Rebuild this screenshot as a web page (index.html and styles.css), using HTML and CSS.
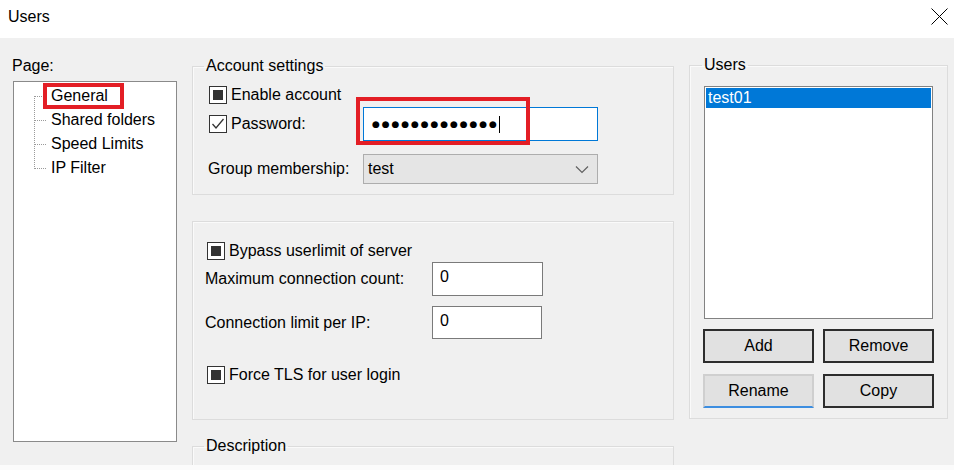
FILE: index.html
```html
<!DOCTYPE html>
<html>
<head>
<meta charset="utf-8">
<title>Users</title>
<link rel="stylesheet" href="styles.css">
</head>
<body>
<div class="window">
  <div class="titlebar">
    <span class="title">Users</span>
    <svg class="close" width="17" height="17" viewBox="0 0 17 17"><line x1="0.5" y1="0.5" x2="16.5" y2="16.5"/><line x1="16.5" y1="0.5" x2="0.5" y2="16.5"/></svg>
  </div>
  <div class="main">
    <div class="col-left">
      <div class="page-label">Page:</div>
      <div class="tree">
        <svg class="tree-lines" width="14" height="96" viewBox="0 0 14 96">
          <line x1="1.5" y1="12" x2="1.5" y2="85"/>
          <line x1="2" y1="12.5" x2="14" y2="12.5"/>
          <line x1="2" y1="36.5" x2="14" y2="36.5"/>
          <line x1="2" y1="60.5" x2="14" y2="60.5"/>
          <line x1="2" y1="84.5" x2="14" y2="84.5"/>
        </svg>
        <ul class="tree-items">
          <li><span class="tree-label marked">General</span></li>
          <li><span class="tree-label">Shared folders</span></li>
          <li><span class="tree-label">Speed Limits</span></li>
          <li><span class="tree-label">IP Filter</span></li>
        </ul>
      </div>
    </div>
    <div class="col-mid">
      <fieldset class="group acct">
        <legend>Account settings</legend>
        <div class="acct-body">
          <div class="row r-enable">
            <span class="cb"><span class="cb-fill"></span></span>
            <span class="cb-text">Enable account</span>
          </div>
          <div class="row r-pass">
            <div class="pass-left">
              <span class="cb"><svg width="16" height="16" viewBox="0 0 16 16"><polyline points="2.5,8 6,12 13.5,3"/></svg></span>
              <span class="cb-text">Password:</span>
            </div>
            <div class="textbox focused"><span class="dots">●●●●●●●●●●●●●</span><span class="caret"></span></div>
            <span class="annot"></span>
          </div>
          <div class="row r-group">
            <span class="group-label">Group membership:</span>
            <div class="select"><span>test</span><svg width="14" height="9" viewBox="0 0 14 9"><polyline points="1,1.5 7,7.5 13,1.5"/></svg></div>
          </div>
        </div>
      </fieldset>
      <fieldset class="group limits">
        <div class="limits-body">
          <div class="row r-bypass">
            <span class="cb"><span class="cb-fill"></span></span>
            <span class="cb-text">Bypass userlimit of server</span>
          </div>
          <div class="row r-max">
            <span class="field-label">Maximum connection count:</span>
            <div class="numbox">0</div>
          </div>
          <div class="row r-perip">
            <span class="field-label">Connection limit per IP:</span>
            <div class="numbox short">0</div>
          </div>
          <div class="row r-tls">
            <span class="cb"><span class="cb-fill"></span></span>
            <span class="cb-text">Force TLS for user login</span>
          </div>
        </div>
      </fieldset>
      <fieldset class="group desc">
        <legend>Description</legend>
      </fieldset>
    </div>
    <div class="col-right">
      <fieldset class="group users">
        <legend>Users</legend>
        <div class="users-body">
          <div class="listbox">
            <div class="list-item selected">test01</div>
          </div>
          <div class="btn-row first">
            <div class="btn">Add</div>
            <div class="btn">Remove</div>
          </div>
          <div class="btn-row">
            <div class="btn hover">Rename</div>
            <div class="btn">Copy</div>
          </div>
        </div>
      </fieldset>
    </div>
  </div>
  <div class="bottom-strip"></div>
</div>
</body>
</html>
```

FILE: styles.css
```css
* { box-sizing: border-box; }
html, body { margin: 0; padding: 0; }
body {
  width: 954px;
  height: 470px;
  overflow: hidden;
  background: #f0f0f0;
  font-family: "Liberation Sans", Arial, sans-serif;
  font-size: 16px;
  line-height: 18px;
  color: #000;
}
.window { width: 954px; height: 470px; display: flex; flex-direction: column; }
.titlebar {
  height: 38px;
  background: #fff;
  display: flex;
  justify-content: space-between;
  align-items: flex-start;
  padding: 8px 6px 0 8px;
  flex: none;
}
.title { line-height: 18px; }
.close { margin-top: 0; }
.close line { stroke: #000; stroke-width: 1; }

.main {
  height: 427px;
  display: flex;
  padding-left: 12px;
  overflow: hidden;
  flex: none;
}
.bottom-strip { height: 5px; background: #fbfbfb; flex: none; }

/* left column */
.col-left { width: 165px; flex: none; padding-top: 19px; }
.page-label { line-height: 18px; }
.tree {
  margin: 6px 0 0 1px;
  width: 164px;
  height: 361px;
  background: #fff;
  border: 1px solid #8a8a8a;
  display: flex;
  align-items: flex-start;
  padding: 2px 0 0 19px;
}
.tree-lines line { stroke: #9a9a9a; stroke-width: 1; stroke-dasharray: 1 1; }
.tree-items { list-style: none; margin: 0; padding: 0; }
.tree-items li { height: 24px; display: flex; align-items: center; }
.tree-label { display: inline-block; height: 18px; line-height: 18px; padding: 0 12px 0 4px; }
.tree-label.marked { outline: 4px solid #e31e25; }

/* middle column */
.col-mid { width: 482px; flex: none; margin-left: 15px; }
.group {
  margin: 0;
  padding: 0;
  min-width: 0;
  border: 1px solid #dcdcdc;
  box-shadow: inset 1px 1px 0 #fafafa;
}
.group legend { margin-left: 11px; padding: 0 2px; line-height: 18px; }
.acct { margin-top: 19px; }
.acct-body { padding: 10px 0 10px 16px; }
.row { display: flex; align-items: center; position: relative; }
.r-enable { height: 20px; margin-top: 0; }
.r-pass { height: 34px; margin-top: 2px; }
.r-group { height: 30px; margin-top: 13px; }

.cb {
  width: 18px; height: 18px;
  border: 1px solid #333;
  background: #fff;
  display: flex; align-items: center; justify-content: center;
  flex: none;
}
.cb-fill { width: 10px; height: 10px; background: #333; }
.cb svg polyline { fill: none; stroke: #333; stroke-width: 1.3; }
.cb-text { margin-left: 4px; }

.pass-left { width: 154px; display: flex; align-items: center; flex: none; }
.textbox {
  width: 235px; height: 34px;
  background: #fff;
  border: 1px solid #0078d7;
  display: flex; align-items: center;
  padding-left: 8px;
}
.dots { font-family: "DejaVu Sans", sans-serif; font-size: 9px; letter-spacing: 1.9px; line-height: 14px; }
.caret { width: 1px; height: 17px; background: #000; margin-left: 0; }
.annot {
  position: absolute;
  left: 147px; top: -10px;
  width: 174px; height: 48px;
  border: 4px solid #e31e25;
}
.group-label { width: 155px; margin-left: -1px; flex: none; }
.select {
  width: 235px; height: 30px;
  background: #e5e5e5;
  border: 1px solid #adadad;
  display: flex; align-items: center; justify-content: space-between;
  padding: 0 8px 0 4px;
}
.select svg polyline { fill: none; stroke: #606060; stroke-width: 1.2; }

.limits { margin-top: 26px; }
.limits-body { padding: 19px 0 34px 12px; }
.r-bypass, .r-tls { height: 20px; padding-left: 2px; }
.r-max { height: 34px; margin-top: 1px; }
.r-perip { height: 33px; margin-top: 10px; }
.r-tls { margin-top: 26px; }
.field-label { width: 227px; flex: none; }
.numbox {
  width: 111px; height: 34px;
  background: #fff;
  border: 1px solid #7a7a7a;
  padding: 0 0 0 7px;
  line-height: 28px;
}
.numbox.short { width: 110px; height: 33px; }

.desc { margin-top: 17px; height: 60px; }

/* right column */
.col-right { width: 259px; flex: none; margin-left: 15px; }
.users { margin-top: 18px; }
.users legend { margin-left: 12px; }
.users-body { padding: 12px 13px 10px 14px; }
.listbox {
  width: 229px; height: 233px;
  background: #fff;
  border: 1px solid #828282;
  padding: 1px;
}
.list-item { height: 20px; line-height: 20px; padding-left: 2px; }
.list-item.selected { background: #0078d7; color: #fff; }
.btn-row { display: flex; gap: 9px; margin-left: -1px; margin-top: 11px; }
.btn-row.first { margin-top: 10px; }
.btn {
  width: 111px; height: 34px;
  background: #e1e1e1;
  border: 2px solid #2d2d2d;
  display: flex; align-items: center; justify-content: center;
}
.btn.hover {
  border: 2px solid #cfcfcf;
  border-bottom-color: #3d8ee0;
}
```
